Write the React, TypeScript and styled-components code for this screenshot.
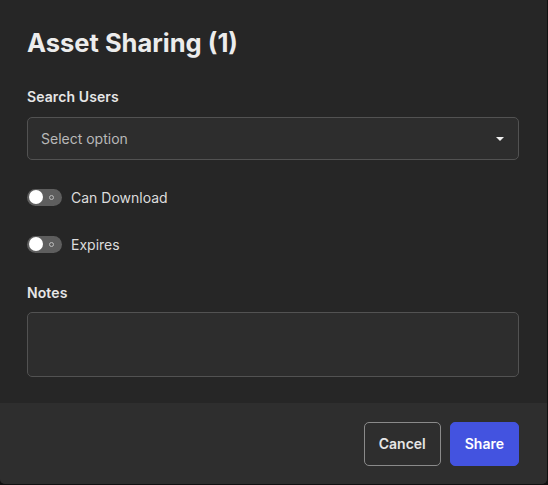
import React, { useState } from "react";
import styled, { createGlobalStyle } from "styled-components";

const Global = createGlobalStyle`
  html, body { margin: 0; padding: 0; background: #111111; }
  body { font-family: Inter, "Noto Sans", sans-serif; -webkit-font-smoothing: antialiased; }
  * { box-sizing: border-box; }
`;

const Dialog = styled.div`
  width: 547px;
  height: 484px;
  background: #262626;
  border-radius: 0 0 5px 5px;
  overflow: hidden;
  display: flex;
  flex-direction: column;
`;

const Body = styled.div`
  flex: 1;
  padding: 27px 28px 0 27px;
  display: flex;
  flex-direction: column;
`;

const Title = styled.h1`
  margin: 0;
  font-size: 25.5px;
  font-weight: 700;
  line-height: 32px;
  color: #ececec;
`;

const Label = styled.div<{ $top: number }>`
  margin-top: ${(p) => p.$top}px;
  font-size: 14px;
  font-weight: 600;
  line-height: 20px;
  color: #e6e6e6;
  letter-spacing: 0.1px;
`;

const SelectBox = styled.div`
  margin-top: 10px;
  height: 43px;
  border: 1px solid #525252;
  border-radius: 5px;
  background: #2d2d2d;
  display: flex;
  align-items: center;
  justify-content: space-between;
  padding: 0 14px 0 13px;
`;

const Placeholder = styled.span`
  font-size: 14px;
  color: #b8b8b8;
  margin-top: -1px;
`;

const Caret = styled.span`
  width: 0;
  height: 0;
  border-left: 4.5px solid transparent;
  border-right: 4.5px solid transparent;
  border-top: 4.5px solid #f0f0f0;
  margin-top: 1px;
`;

const ToggleRow = styled.label<{ $top: number }>`
  margin-top: ${(p) => p.$top}px;
  display: flex;
  align-items: center;
  gap: 9px;
  height: 20px;
  cursor: pointer;
`;

const Track = styled.span<{ $on: boolean }>`
  position: relative;
  width: 35px;
  height: 17px;
  border-radius: 9px;
  background: ${(p) => (p.$on ? "#4353e0" : "#5e5e5e")};
  flex-shrink: 0;
`;

const Knob = styled.span<{ $on: boolean }>`
  position: absolute;
  top: 1.5px;
  left: ${(p) => (p.$on ? "19.5px" : "1.5px")};
  width: 14px;
  height: 14px;
  border-radius: 50%;
  background: #ffffff;
`;

const Ring = styled.span`
  position: absolute;
  top: 6px;
  right: 8px;
  width: 5px;
  height: 5px;
  border-radius: 50%;
  border: 1.2px solid #bdbdbd;
`;

const ToggleText = styled.span`
  font-size: 14px;
  color: #dcdcdc;
`;

const TextArea = styled.textarea`
  margin-top: 9px;
  height: 65px;
  resize: none;
  border: 1px solid #525252;
  border-radius: 5px;
  background: #2d2d2d;
  color: #ddd;
  font-family: inherit;
  font-size: 14px;
  padding: 10px 13px;
  outline: none;
`;

const Footer = styled.div`
  height: 81px;
  background: #2e2e2e;
  display: flex;
  align-items: center;
  justify-content: flex-end;
  gap: 9px;
  padding: 0 28px 0 0;
`;

const Button = styled.button<{ $primary?: boolean }>`
  height: 44px;
  padding: 0 ${(p) => (p.$primary ? "14px" : "14px")};
  border-radius: 5px;
  font-family: inherit;
  font-size: 14px;
  font-weight: 600;
  cursor: pointer;
  color: ${(p) => (p.$primary ? "#ffffff" : "#e6e6e6")};
  background: ${(p) => (p.$primary ? "#4353e0" : "transparent")};
  border: 1px solid ${(p) => (p.$primary ? "#4353e0" : "#8a8a8a")};
`;

function Toggle({ label, top }: { label: string; top: number }) {
  const [on, setOn] = useState(false);
  return (
    <ToggleRow $top={top} onClick={() => setOn(!on)}>
      <Track $on={on}>
        {!on && <Ring />}
        <Knob $on={on} />
      </Track>
      <ToggleText>{label}</ToggleText>
    </ToggleRow>
  );
}

export default function App() {
  return (
    <>
      <Global />
      <Dialog>
        <Body>
          <Title>Asset Sharing (1)</Title>
          <Label $top={28}>Search Users</Label>
          <SelectBox>
            <Placeholder>Select option</Placeholder>
            <Caret />
          </SelectBox>
          <Toggle label="Can Download" top={27} />
          <Toggle label="Expires" top={27} />
          <Label $top={29}>Notes</Label>
          <TextArea />
        </Body>
        <Footer>
          <Button>Cancel</Button>
          <Button $primary>Share</Button>
        </Footer>
      </Dialog>
    </>
  );
}
